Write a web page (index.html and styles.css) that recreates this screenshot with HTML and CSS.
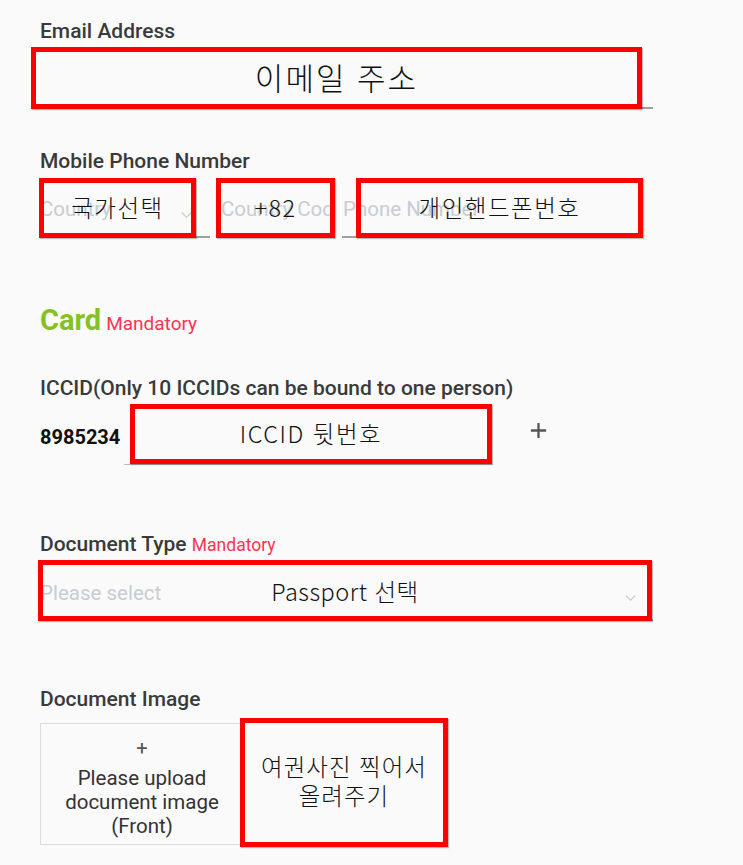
FILE: index.html
```html
<!DOCTYPE html>
<html lang="ko">
<head>
<meta charset="utf-8">
<link rel="stylesheet" href="styles.css">
</head>
<body>
<div class="form">
  <div class="label lbl-email">Email Address</div>
  <div class="field field-email">
    <div class="note note-email"><span class="note-big">이메일 주소</span></div>
  </div>

  <div class="label lbl-mobile">Mobile Phone Number</div>
  <div class="phone-row">
    <div class="field f-country">
      <span class="ph">Country</span>
      <svg class="chev" viewBox="0 0 12 8"><path d="M1 1.5 L6 6.5 L11 1.5" fill="none" stroke="#c0c4cc" stroke-width="1.2"/></svg>
      <div class="note note-country"><span>국가선택</span></div>
    </div>
    <div class="field f-code">
      <span class="ph">Country Code</span>
      <div class="note note-code"><span>+82</span></div>
    </div>
    <div class="field f-phone">
      <span class="ph">Phone Number</span>
      <div class="note note-phone"><span>개인핸드폰번호</span></div>
    </div>
  </div>

  <div class="section-title"><span class="card">Card</span> <span class="mand">Mandatory</span></div>

  <div class="label lbl-iccid">ICCID(Only 10 ICCIDs can be bound to one person)</div>
  <div class="iccid-row">
    <span class="prefix">8985234</span>
    <div class="field f-iccid">
      <div class="note note-iccid"><span>ICCID 뒷번호</span></div>
    </div>
    <svg class="add" viewBox="0 0 20 20"><path d="M10 2 V18 M2 10 H18" stroke="#555" stroke-width="2.4" fill="none"/></svg>
  </div>

  <div class="label lbl-doctype">Document Type <span class="mand-sm">Mandatory</span></div>
  <div class="field f-select">
    <span class="ph">Please select</span>
    <svg class="chev chev-doc" viewBox="0 0 12 8"><path d="M1 1.5 L6 6.5 L11 1.5" fill="none" stroke="#c0c4cc" stroke-width="1.2"/></svg>
    <div class="note note-doc"><span>Passport 선택</span></div>
  </div>

  <div class="label lbl-docimg">Document Image</div>
  <div class="upload">
    <div class="up-plus">+</div>
    <div class="up-text">Please upload<br>document image<br>(Front)</div>
    <div class="note note-upload"><span>여권사진 찍어서<br>올려주기</span></div>
  </div>
</div>
</body>
</html>
```

FILE: styles.css
```css
html, body {
  margin: 0;
  padding: 0;
  background: #fafafa;
}

body {
  font-family: Roboto, "Noto Sans", sans-serif;
  color: #303133;
}

.form {
  width: 613px;
  padding: 19px 0 40px 40px;
}

.label {
  font-size: 21px;
  font-weight: 500;
  line-height: 25px;
  height: 25px;
  color: #3a3a3a;
  white-space: nowrap;
}

.field {
  position: relative;
  box-sizing: border-box;
  border-bottom: 2px solid #a0a0a0;
}

.ph {
  font-size: 20.5px;
  color: #c8ccd4;
  white-space: nowrap;
  line-height: 24px;
}

/* annotation boxes (overlays) */
.note {
  position: absolute;
  box-sizing: border-box;
  border: 5px solid #ff0000;
  box-shadow: 1px 1px 1px rgba(0, 0, 0, 0.25);
  display: flex;
  align-items: center;
  justify-content: center;
  text-align: center;
  font-family: "Noto Sans CJK KR", "Noto Sans", sans-serif;
  font-weight: 300;
  font-size: 23.5px;
  letter-spacing: 1.5px;
  color: #111;
  line-height: 30px;
  white-space: nowrap;
  padding-bottom: 3px;
}

.note-big {
  font-size: 31px;
  letter-spacing: 2px;
}

/* email */
.field-email {
  margin-top: 3px;
  height: 62px;
}

.note-email {
  left: -9px;
  top: 0;
  width: 611px;
  height: 62px;
}

/* mobile */
.lbl-mobile {
  margin-top: 40px;
}

.phone-row {
  display: flex;
  gap: 8px;
  margin-top: 4px;
}

.phone-row .field {
  height: 60px;
  display: flex;
  align-items: center;
  padding-top: 4px;
}

.phone-row .ph {
  overflow: hidden;
}

.f-country {
  width: 170px;
}

.f-code {
  width: 116px;
}

.f-code .ph {
  width: 110px;
  padding-left: 3px;
}

.f-phone {
  width: 301px;
}

.f-phone .ph {
  padding-left: 1px;
  width: 290px;
}

.chev {
  position: absolute;
  width: 11px;
  height: 8px;
  right: 18px;
  top: 33px;
}

.note-country {
  left: -1px;
  top: 0;
  width: 157px;
  height: 60px;
}

.note-code {
  left: -2px;
  top: 0;
  width: 119px;
  height: 60px;
}

.note-phone {
  left: 14px;
  top: 0;
  width: 287px;
  height: 60px;
}

/* card heading */
.section-title {
  margin-top: 68px;
  height: 34px;
  line-height: 34px;
}

.card {
  font-size: 29px;
  font-weight: 700;
  color: #86c225;
  line-height: 1;
}

.mand {
  margin-left: 1px;
  font-size: 19px;
  color: #ff3355;
  line-height: 1;
}

/* iccid */
.lbl-iccid {
  margin-top: 36px;
}

.iccid-row {
  display: flex;
  align-items: center;
  margin-top: 3px;
  height: 62px;
}

.prefix {
  font-size: 20px;
  font-weight: 700;
  color: #111;
  width: 84px;
  padding-top: 4px;
}

.f-iccid {
  width: 368px;
  height: 61px;
  border-bottom-width: 1px;
  border-bottom-color: #bbb;
  align-self: flex-start;
}

.note-iccid {
  left: 6px;
  top: 0;
  width: 362px;
  height: 60px;
}

.add {
  width: 19px;
  height: 19px;
  margin-left: 37px;
  margin-bottom: 10px;
}

/* document type */
.lbl-doctype {
  margin-top: 66px;
}

.mand-sm {
  font-size: 17.5px;
  font-weight: 400;
  color: #ff3355;
}

.f-select {
  margin-top: 3px;
  height: 61px;
  width: 613px;
  display: flex;
  align-items: center;
  padding-top: 6px;
}

.chev-doc {
  right: 17px;
  top: 34px;
}

.note-doc {
  left: -2px;
  top: 0;
  width: 614px;
  height: 61px;
  letter-spacing: 0.5px;
  padding-bottom: 0;
}

/* document image */
.lbl-docimg {
  margin-top: 66px;
}

.upload {
  position: relative;
  margin-top: 11px;
  width: 204px;
  height: 122px;
  box-sizing: border-box;
  border: 1px solid #dcdcdc;
  background: #fafafa;
  display: flex;
  flex-direction: column;
  align-items: center;
  text-align: center;
  padding-top: 14px;
}

.up-plus {
  font-size: 20px;
  line-height: 20px;
  color: #555;
}

.up-text {
  margin-top: 8px;
  font-size: 20.5px;
  line-height: 24px;
  color: #333;
}

.note-upload {
  left: 199px;
  top: -6px;
  width: 208px;
  height: 129px;
  line-height: 29px;
  letter-spacing: 1px;
}
```
